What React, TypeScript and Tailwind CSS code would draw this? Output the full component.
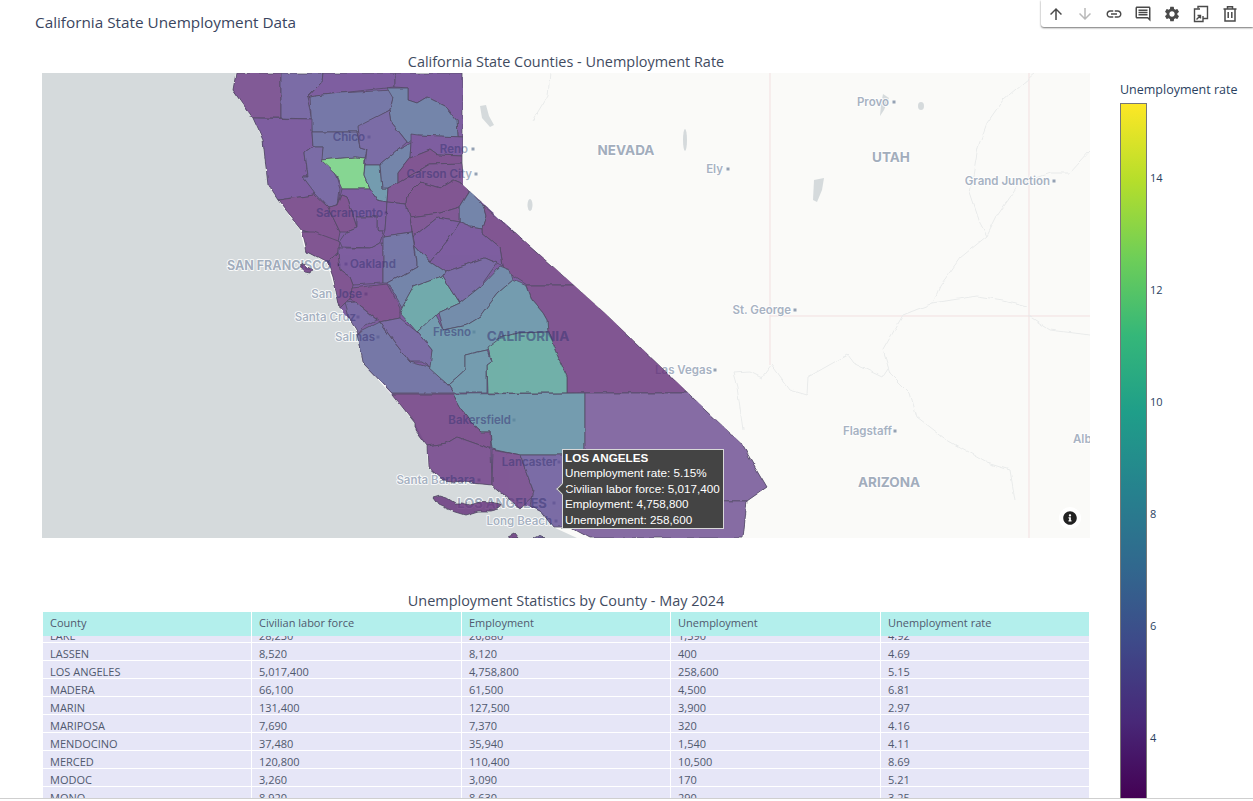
import { MdArrowDownward, MdArrowUpward, MdLink, MdOutlineComment, MdSettings } from "react-icons/md";
import { FaInfoCircle } from "react-icons/fa";

const dark = "#642d79";
const plum = "#64317e";
const purple = "#5f398a";
const violet = "#5b4a91";
const slate = "#575894";
const steel = "#526797";
const blue = "#527398";
const sea = "#52859d";
const teal = "#4f979a";
const jade = "#4f9e95";
const green = "#6bce78";
const bern = "#6a498f";

const stateOutline =
  "236,73 233,90 253,118 263,140 268,185 278,200 302,230 307,252 328,263 333,277 340,308 350,320 358,333 363,363 392,394 415,423 415,430 427,446 428,467 443,480 492,485 520,503 540,510 553,527 570,527 590,538 743,538 747,501 767,487 741,443 700,404 605,313 463,185 463,73";

// map polygons are in page coordinates, the svg viewBox takes care of the offset
const counties: [string, string][] = [
  ["236,73 281,73 281,118 253,118 233,90", plum],
  ["281,73 323,73 322,82 307,97 312,119 281,118", violet],
  ["323,73 395,73 395,87 340,93 323,95 307,98 322,82", purple],
  ["395,73 463,73 463,137 458,137 457,120 447,107 427,97 417,103 408,100 408,88 395,87", purple],
  ["310,97 323,95 340,93 393,90 393,98 390,110 360,127 357,132 312,132", slate],
  ["387,88 408,88 408,100 417,103 427,97 447,107 457,120 458,137 418,135 408,143 392,123 390,110 393,98", steel],
  ["253,118 312,119 312,132 313,147 305,153 308,177 303,177 315,192 315,195 278,200 268,185 263,140", purple],
  ["312,132 357,132 360,148 367,150 365,158 355,157 321,160 323,147 313,147", slate],
  ["357,127 390,110 392,123 407,142 398,150 380,165 365,165 367,150 360,148", violet],
  ["313,147 323,147 322,160 335,173 340,189 338,205 328,207 315,193 303,177 308,177 305,153", violet],
  ["321,160 355,157 365,158 364,175 370,189 342,189 335,173", green],
  ["365,165 380,165 382,188 388,188 387,202 377,200 370,189 364,175", sea],
  ["380,165 398,150 411,143 410,158 398,173 398,183 388,188 382,188", steel],
  ["411,134 418,135 463,137 463,156 437,155 430,150 410,158 411,143", purple],
  ["410,158 430,150 437,155 463,156 463,163 430,164 420,170 398,183 398,173", dark],
  ["398,183 420,170 430,164 463,163 465,185 453,180 440,188 420,182 407,195 406,204 387,202 388,188", plum],
  ["407,195 420,182 440,188 453,180 465,185 469,192 460,207 440,213 410,217 406,204", dark],
  ["470,191 483,205 486,216 482,228 470,226 460,222 460,207", steel],
  ["483,205 575,285 527,285 513,276 503,266 500,248 482,233 482,228 486,216", dark],
  ["527,285 575,285 605,313 688,393 567,393 567,377 555,350 548,332 547,320 543,313 532,300", dark],
  ["342,189 370,189 377,200 387,202 385,230 383,230 377,230 377,217 357,217 357,228 347,197 342,195 338,205", purple],
  ["278,200 315,195 328,207 340,232 338,242 302,230", dark],
  ["328,207 338,205 342,195 347,197 357,228 347,232 340,232", dark],
  ["302,232 313,232 340,242 338,252 328,263 307,252", dark],
  ["347,232 357,228 357,217 377,217 377,230 383,230 380,243 370,248 342,247 340,242", purple],
  ["338,248 370,248 380,243 383,243 383,283 353,285 350,277 340,270 338,257", purple],
  ["338,253 340,270 350,277 353,285 352,290 350,300 345,303 340,308 333,277 328,263", dark],
  ["352,288 387,284 400,307 400,318 380,322 355,302 350,300", dark],
  ["387,202 406,204 410,217 412,232 383,236 385,230", purple],
  ["410,217 440,213 460,207 460,222 437,218 413,237", plum],
  ["413,237 437,218 460,222 448,240 430,262 415,245 412,232", purple],
  ["460,222 470,226 482,228 482,233 500,248 503,266 497,263 485,258 445,272 430,262 448,240", purple],
  ["383,236 412,232 417,262 417,267 388,283 383,283", slate],
  ["415,245 430,262 445,272 443,276 413,287 402,307 388,283 417,267 417,262", steel],
  ["443,276 460,303 438,313 417,332 400,313 402,307 413,287", teal],
  ["445,272 485,258 497,263 480,287 460,303 443,276", violet],
  ["438,313 460,303 480,287 500,266 510,270 513,280 498,293 483,313 480,317 467,325 443,330", blue],
  ["417,332 435,315 443,330 467,325 480,317 483,313 498,293 513,280 527,286 532,300 543,313 547,320 548,332 517,333 500,338 487,350 465,355 465,370 448,385 428,368 432,350", sea],
  ["488,393 567,393 567,377 555,350 548,332 517,333 500,338 488,347 491,362 487,365", jade],
  ["448,385 465,370 465,355 487,350 491,362 487,365 487,393 453,393", sea],
  ["453,394 585,393 585,455 520,455 492,449 490,432 481,432 473,425 460,407", sea],
  ["392,394 453,394 460,407 473,425 481,432 490,432 491,449 457,437 447,443 427,446 415,430 415,423", dark],
  ["358,333 380,322 395,343 410,362 428,367 448,385 453,393 392,393 363,363", slate],
  ["380,322 400,318 417,332 432,350 430,368 422,362 410,362 395,343", violet],
  ["345,303 355,302 377,320 363,327 358,333 350,320", violet],
  ["427,446 447,443 457,437 491,449 492,485 443,480 428,467", plum],
  ["493,450 520,455 533,490 532,497 520,508 492,485", plum],
  ["520,455 585,455 590,500 570,527 553,527 540,510 530,505 533,490", violet],
  ["585,393 688,393 741,443 767,487 747,501 600,501 585,455", bern],
  ["570,527 590,500 747,501 743,538 590,538", bern],
  ["433,498 440,496 447,498 455,503 462,503 470,505 480,502 490,503 500,505 498,509 490,511 478,511 465,515 455,512 447,509 438,505", dark],
  ["300,266 304,264 312,270 310,274 305,273", dark],
  ["508,536 514,533 518,538 508,538", dark],
  ["532,538 538,535 545,538", violet],
];

// outside the state
const outerLabels: [string, number, number][] = [
  ["Provo", 889, 106],
  ["Ely", 723, 173],
  ["Grand Junction", 1050, 185],
  ["St. George", 791, 314],
  ["Las Vegas", 712, 374],
  ["Flagstaff", 892, 435],
];

// these sit under the choropleth, a darker copy is clipped to the state on top
const innerLabels: [string, number, number][] = [
  ["Chico", 365, 141],
  ["Reno", 468, 153],
  ["Carson City", 472, 178],
  ["Sacramento", 383, 217],
  ["San Jose", 362, 298],
  ["Santa Cruz", 356, 321],
  ["Salinas", 375, 341],
  ["Fresno", 471, 336],
  ["Bakersfield", 511, 424],
  ["Lancaster", 557, 466],
  ["Santa Barbara", 475, 484],
  ["Long Beach", 552, 525],
];

const outerStates: [string, number, number, number][] = [
  ["NEVADA", 626, 155, 13.5],
  ["UTAH", 891, 162, 13.5],
  ["ARIZONA", 889, 487, 13.5],
];

const innerStates: [string, number, number, number][] = [
  ["CALIFORNIA", 528, 341, 13.5],
  ["SAN FRANCISCO", 279, 270, 12.5],
  ["LOS ANGELES", 502, 508, 13],
];

const dots: [number, number][] = [
  [894, 102], [728, 169], [1054, 181], [795, 310], [715, 370], [895, 431], [369, 137], [473, 149],
  [476, 174], [386, 213], [366, 294], [358, 317], [378, 337], [474, 332], [514, 420], [559, 462],
  [479, 480], [556, 521], [339, 265], [346, 264], [554, 503],
];

const rivers = [
  "M1035 73 L1003 100 L987 123 L978 147 L970 193 L980 223 L987 236 L960 258 L940 286 L933 303 L913 311 L903 315 L883 350 L890 373 L910 393 L917 417 L947 440 L987 463 L1010 470 L1015 500",
  "M1020 183 L997 216 L987 236",
  "M1090 151 L1070 173 L1050 173 L1020 183",
  "M933 303 L977 296 L1003 300 L1027 306",
  "M733 373 L750 372 L762 378 L772 365 L790 390 L807 395 L808 377 L847 355 L853 363 L882 377 L888 368",
  "M733 373 L737 387 L743 430",
  "M550 73 L548 96 L533 121",
  "M1029 316 L1050 330 L1090 335",
];

const rows = [
  ["LAKE", "28,230", "26,880", "1,390", "4.92"],
  ["LASSEN", "8,520", "8,120", "400", "4.69"],
  ["LOS ANGELES", "5,017,400", "4,758,800", "258,600", "5.15"],
  ["MADERA", "66,100", "61,500", "4,500", "6.81"],
  ["MARIN", "131,400", "127,500", "3,900", "2.97"],
  ["MARIPOSA", "7,690", "7,370", "320", "4.16"],
  ["MENDOCINO", "37,480", "35,940", "1,540", "4.11"],
  ["MERCED", "120,800", "110,400", "10,500", "8.69"],
  ["MODOC", "3,260", "3,090", "170", "5.21"],
  ["MONO", "8,920", "8,630", "290", "3.25"],
];

const headers = ["County", "Civilian labor force", "Employment", "Unemployment", "Unemployment rate"];
const ticks = ["14", "12", "10", "8", "6", "4"];

const Toolbar = () => {
  return (
    <div className="absolute right-0 top-0 z-20 flex h-[27px] w-[212px] items-center gap-[11px] rounded-bl-[3px] bg-white pl-[6px] text-[#4a4a4a] shadow-[0_1px_2px_rgba(0,0,0,0.55)]">
      <MdArrowUpward size={18} />
      <MdArrowDownward size={18} className="text-[#b9b9b9]" />
      <MdLink size={18} />
      <MdOutlineComment size={18} />
      <MdSettings size={18} />
      <svg viewBox="0 0 18 18" className="h-[18px] w-[18px]" fill="none" stroke="currentColor" strokeWidth="1.4">
        <path d="M6 3.5 V1.5 H15.5 V13.5 H11" />
        <path d="M8 4 H2.5 V16.5 H11 V11" />
        <path d="M4.5 14.5 L8.5 10.5 M5.5 10.5 H8.5 V13.5" />
      </svg>
      <svg viewBox="0 0 18 18" className="h-[18px] w-[18px]" fill="none" stroke="currentColor" strokeWidth="1.5">
        <path d="M2.5 4 H15.5 M6.5 3.5 V1.8 H11.5 V3.5" />
        <path d="M4 4 V16 H14 V4" />
        <path d="M7.2 7 V13 M10.8 7 V13" />
      </svg>
    </div>
  );
};

const CountyMap = () => {
  return (
    <div className="relative h-[465px] w-[1048px] ml-[42px] bg-[#fafaf8]">
      <svg viewBox="42 73 1048 465" className="block h-full w-full [font-family:'Inter',sans-serif]">
        <defs>
          <filter id="wiggle" x="42" y="73" width="1048" height="465" filterUnits="userSpaceOnUse">
            <feTurbulence type="fractalNoise" baseFrequency="0.09" numOctaves="2" seed="4" />
            <feDisplacementMap in="SourceGraphic" scale="4" xChannelSelector="R" yChannelSelector="G" />
          </filter>
          <clipPath id="state-east">
            <polygon points="42,73 463,73 463,185 605,313 700,404 741,443 800,443 800,538 42,538" />
          </clipPath>
          <clipPath id="state-shape">
            <polygon points={stateOutline} />
          </clipPath>
        </defs>
        <path
          d="M42 73 H236 L233 90 L253 118 L263 140 L268 185 L278 200 L300 230 L305 250 L327 263 L340 308 L358 333 L363 363 L390 393 L415 423 L427 447 L428 467 L443 480 L490 485 L520 503 L540 510 L553 527 L577 538 H42 Z"
          fill="#d5dadc"
        />
        <g fill="none" stroke="#f2dfe0" strokeWidth="1">
          <path d="M770 73 V365 M770 316 H1090 M1029 73 V538" />
        </g>
        <g fill="none" stroke="#e9ebeb" strokeWidth="1" filter="url(#wiggle)">
          {rivers.map((d) => (
            <path key={d} d={d} />
          ))}
        </g>
        <g fill="#d5dadc">
          <path d="M480 106 L486 105 L489 116 L494 125 L490 127 L482 118 Z" />
          <ellipse cx="530" cy="205" rx="2.5" ry="6" />
          <ellipse cx="685" cy="140" rx="2" ry="11" />
          <path d="M814 180 L824 178 L822 190 L817 202 L813 200 Z" />
          <path d="M883 94 L889 98 L884 110 L880 116 L881 105 Z" />
          <ellipse cx="921" cy="106" rx="3" ry="4" />
        </g>
        <g fontWeight="600" fontSize="11.5" fill="#a7b2c2" stroke="#ffffff" strokeWidth="1.5" paintOrder="stroke" textAnchor="end">
          {outerLabels.concat(innerLabels).map(([label, x, y]) => (
            <text key={label} x={x} y={y}>
              {label}
            </text>
          ))}
          <text x="350" y="268" textAnchor="start">
            Oakland
          </text>
          <text x="1073" y="443" textAnchor="start">
            Alb
          </text>
          <text x="822" y="548" textAnchor="start">
            Phoenix
          </text>
        </g>
        <g fontWeight="700" fill="#a2adbc" stroke="#ffffff" strokeWidth="1.5" paintOrder="stroke" textAnchor="middle">
          {outerStates.concat(innerStates).map(([label, x, y, size]) => (
            <text key={label} x={x} y={y} fontSize={size}>
              {label}
            </text>
          ))}
        </g>
        <g fill="#94a1b4">
          {dots.map(([x, y]) => (
            <rect key={`${x}-${y}`} x={x - 1.5} y={y - 1.5} width="3" height="3" />
          ))}
        </g>
        <g clipPath="url(#state-east)">
          <g filter="url(#wiggle)" opacity="0.8">
            <polygon points={stateOutline} fill="#5f398a" />
            <g stroke="#2a2140" strokeWidth="0.8" strokeLinejoin="round">
              {counties.map(([points, fill]) => (
                <polygon key={points} points={points} fill={fill} />
              ))}
            </g>
          </g>
        </g>
        <g clipPath="url(#state-shape)" fill="#4a4480" fillOpacity="0.55" fontWeight="600">
          <g fontSize="11.5" textAnchor="end">
            {innerLabels.map(([label, x, y]) => (
              <text key={label} x={x} y={y}>
                {label}
              </text>
            ))}
            <text x="350" y="268" textAnchor="start">
              Oakland
            </text>
          </g>
          <g fontWeight="700" textAnchor="middle">
            {innerStates.map(([label, x, y, size]) => (
              <text key={label} x={x} y={y} fontSize={size}>
                {label}
              </text>
            ))}
          </g>
        </g>
      </svg>
      <div className="absolute left-[520px] top-[376px] z-10 h-[80px] w-[162px] whitespace-nowrap border border-[#d8d8d8] bg-[#444444] px-[2px] [font-family:'Liberation_Sans',sans-serif] text-[11.7px] leading-[15.4px] text-white">
        <div className="absolute left-[-5px] top-[35px] h-[8px] w-[8px] rotate-45 border-b border-l border-[#d8d8d8] bg-[#444444]" />
        <p className="font-bold">LOS ANGELES</p>
        <p>Unemployment rate: 5.15%</p>
        <p>Civilian labor force: 5,017,400</p>
        <p>Employment: 4,758,800</p>
        <p>Unemployment: 258,600</p>
      </div>
      <div className="absolute left-[1017px] top-[434px] flex h-[22px] w-[22px] items-center justify-center rounded-full bg-white text-[#222222]">
        <FaInfoCircle size={14} />
      </div>
    </div>
  );
};

const CountyTable = () => {
  return (
    <div className="ml-[43px] h-[187px] w-[1047px] overflow-hidden text-[#50596e]">
      <div className="relative z-10 grid h-[24px] grid-cols-[209px_210px_209px_210px_209px] bg-[#b3efec]">
        {headers.map((h) => (
          <div key={h} className="flex items-center border-r border-white pb-[2px] pl-[7px] text-[11px]">
            {h}
          </div>
        ))}
      </div>
      <div className="-mt-[11px]">
        {rows.map((row) => (
          <div key={row[0]} className="grid h-[18px] grid-cols-[209px_210px_209px_210px_209px] border-b border-white bg-[#e6e6f7]">
            {row.map((cell, i) => (
              <div key={i} className="flex items-center border-r border-white pl-[7px] pt-[3px] text-[11px]">
                {cell}
              </div>
            ))}
          </div>
        ))}
      </div>
    </div>
  );
};

const Colorbar = () => {
  return (
    <div className="ml-[30px] pt-[81px] text-[#2a3f5f]">
      <p className="text-[12.5px] leading-[18px] whitespace-nowrap">Unemployment rate</p>
      <div className="mt-[4px] flex">
        <div className="h-[696px] w-[27px] border border-[#777777] bg-[linear-gradient(to_top,#440154,#482878,#3e4989,#31688e,#26828e,#1f9e89,#35b779,#6ece58,#b5de2b,#fde725)]" />
        <div className="ml-[3px] flex flex-col gap-[96px] pt-[67px] text-[11px] leading-[16px]">
          {ticks.map((t) => (
            <span key={t}>{t}</span>
          ))}
        </div>
      </div>
    </div>
  );
};

export default function App() {
  return (
    <div className="relative h-[801px] w-[1253px] overflow-hidden bg-white [font-family:'Open_Sans',sans-serif]">
      <Toolbar />
      <div className="flex h-[799px] overflow-hidden border-b border-[#cfcfcf]">
        <div className="w-[1090px] shrink-0">
          <h1 className="pl-[35px] pt-[12px] text-[15.3px] leading-[20px] text-[#3a4560]">California State Unemployment Data</h1>
          <h2 className="ml-[42px] mt-[20px] w-[1048px] text-center text-[14.45px] leading-[19px] text-[#3f4b5f]">
            California State Counties - Unemployment Rate
          </h2>
          <div className="mt-[2px]">
            <CountyMap />
          </div>
          <h2 className="ml-[42px] mt-[53px] w-[1048px] text-center text-[14.45px] leading-[19px] text-[#3f4b5f]">
            Unemployment Statistics by County - May 2024
          </h2>
          <div className="mt-[2px]">
            <CountyTable />
          </div>
        </div>
        <Colorbar />
      </div>
    </div>
  );
}
